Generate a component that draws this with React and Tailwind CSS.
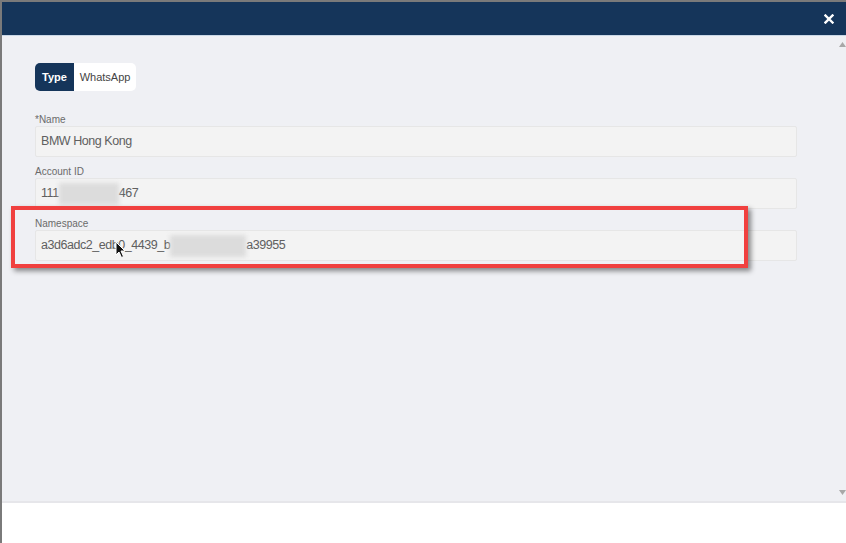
import React from "react";

function Field({ label, children }) {
    return (
        <div className="flex flex-col">
            <label className="text-[10px] leading-[12px] text-[#6b6b6b] h-[12px]">{label}</label>
            <div className="relative h-[31px] w-[762px] bg-[#f3f3f3] border border-[#e6e6e6] rounded-[2px] flex items-center pl-[5px] text-[12.5px] tracking-[-0.45px] text-[#606060]">
                {children}
            </div>
        </div>
    )
}

function Blur({ w }) {
    return <span className={`inline-block h-[22px] ${w} bg-[#dcdcdc] blur-[2px] align-middle`}></span>
}

export default function App() {
    return (
        <div className="h-[543px] w-[846px] flex flex-col bg-[#7a7a7a] pt-[2px] pl-[2px] font-['Liberation_Sans',Arial,sans-serif] overflow-hidden">
            <div className="h-[34px] bg-[#15355a] flex items-center justify-end pr-[12px] border-b border-[#c9d7e6]">
                <svg width="10" height="10" viewBox="0 0 10 10">
                    <path d="M1.5 1.5 L8.5 8.5 M8.5 1.5 L1.5 8.5" stroke="white" strokeWidth="2.4" strokeLinecap="square" />
                </svg>
            </div>
            <div className="flex flex-1 bg-[#eff0f4]">
                <div className="flex-1 flex flex-col pl-[33px] pt-[27px]">
                    <div className="flex h-[28px] w-[101px] rounded-[5px] overflow-hidden text-[11px]">
                        <div className="w-[39px] bg-[#15355a] text-white font-bold flex items-center justify-center">Type</div>
                        <div className="flex-1 bg-white text-[#444] flex items-center justify-center">WhatsApp</div>
                    </div>
                    <div className="flex flex-col gap-[9px] mt-[23px]">
                        <Field label="*Name">BMW Hong Kong</Field>
                        <Field label="Account ID">111<Blur w="w-[60px]" />467</Field>
                        <div className="relative">
                            <div className="absolute left-[-24px] top-[-12px] w-[737px] h-[62px] border-[4px] border-[#f0403f] shadow-[3px_3px_5px_rgba(0,0,0,0.45)] pointer-events-none z-10"></div>
                            <Field label="Namespace">
                                a3d6adc2_edb0_4439_b<Blur w="w-[76px]" />a39955
                                <svg className="absolute left-[79px] top-[10px]" width="12" height="18" viewBox="0 0 12 18">
                                    <path d="M1 1 L1 14 L4 11 L6.5 16.5 L8.5 15.5 L6 10 L10 10 Z" fill="#111" stroke="white" strokeWidth="1" />
                                </svg>
                            </Field>
                        </div>
                    </div>
                </div>
                <div className="w-[8px] flex flex-col justify-between items-center py-[6px] text-[#999]">
                    <svg width="7" height="5" viewBox="0 0 7 5"><path d="M0 5 L3.5 0 L7 5 Z" fill="#a8a8a8" /></svg>
                    <svg width="7" height="5" viewBox="0 0 7 5"><path d="M0 0 L3.5 5 L7 0 Z" fill="#a8a8a8" /></svg>
                </div>
            </div>
            <div className="h-[42px] bg-white border-t-2 border-[#e6e6ea]"></div>
        </div>
    )
}
